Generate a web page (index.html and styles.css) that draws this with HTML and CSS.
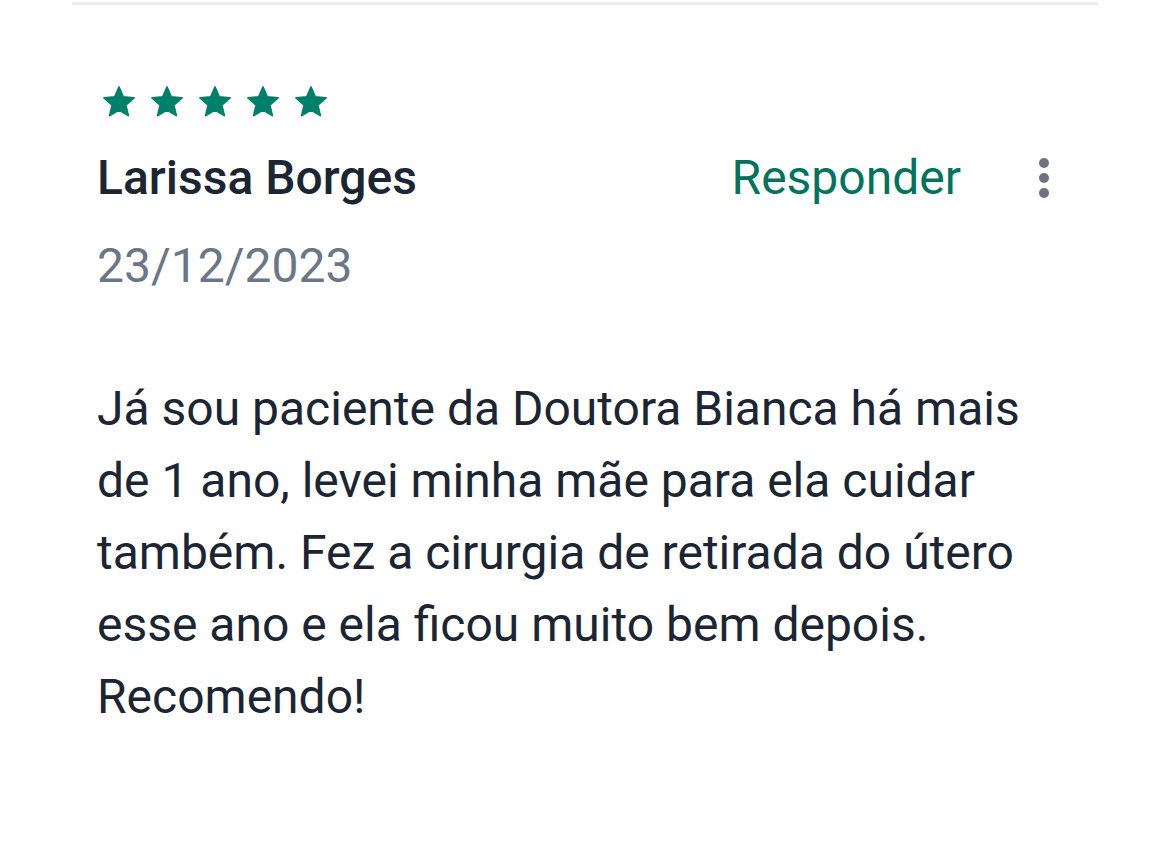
FILE: index.html
```html
<!DOCTYPE html>
<html lang="pt">
<head>
<meta charset="utf-8">
<link rel="stylesheet" href="styles.css">
</head>
<body>
<div class="page">
  <div class="review">
    <div class="stars">
      <svg class="star" viewBox="0 0 24 24"><path d="M12 17.27L18.18 21l-1.64-7.03L22 9.24l-7.19-.61L12 2 9.19 8.63 2 9.24l5.46 4.73L5.82 21z"/></svg>
      <svg class="star" viewBox="0 0 24 24"><path d="M12 17.27L18.18 21l-1.64-7.03L22 9.24l-7.19-.61L12 2 9.19 8.63 2 9.24l5.46 4.73L5.82 21z"/></svg>
      <svg class="star" viewBox="0 0 24 24"><path d="M12 17.27L18.18 21l-1.64-7.03L22 9.24l-7.19-.61L12 2 9.19 8.63 2 9.24l5.46 4.73L5.82 21z"/></svg>
      <svg class="star" viewBox="0 0 24 24"><path d="M12 17.27L18.18 21l-1.64-7.03L22 9.24l-7.19-.61L12 2 9.19 8.63 2 9.24l5.46 4.73L5.82 21z"/></svg>
      <svg class="star" viewBox="0 0 24 24"><path d="M12 17.27L18.18 21l-1.64-7.03L22 9.24l-7.19-.61L12 2 9.19 8.63 2 9.24l5.46 4.73L5.82 21z"/></svg>
    </div>
    <div class="head">
      <div class="name">Larissa Borges</div>
      <div class="actions">
        <span class="reply">Responder</span>
        <svg class="more" viewBox="0 0 12 44"><circle cx="6" cy="7" r="5"/><circle cx="6" cy="22" r="5"/><circle cx="6" cy="37" r="5"/></svg>
      </div>
    </div>
    <div class="date">23/12/2023</div>
    <p class="text">Já sou paciente da Doutora Bianca há mais de 1 ano, levei minha mãe para ela cuidar também. Fez a cirurgia de retirada do útero esse ano e ela ficou muito bem depois. Recomendo!</p>
  </div>
</div>
</body>
</html>
```

FILE: styles.css
```css
* { box-sizing: border-box; }
html, body { margin: 0; padding: 0; background: #fff; }
body { font-family: Roboto, "Liberation Sans", sans-serif; }
.page { width: 1026px; margin-left: 72px; border-top: 3px solid #ececee; margin-top: 2px; }
.review { padding: 79px 0 0 25px; }
.stars { display: flex; gap: 12px; margin-left: 4px; }
.star { width: 36px; height: 36px; fill: #00806a; stroke: #00806a; stroke-width: 1.2; stroke-linejoin: round; }
.head { display: flex; align-items: center; justify-content: space-between; margin-top: 30px; padding-right: 48px; }
.name { font-size: 48px; font-weight: 500; color: #1b2533; line-height: 56px; }
.actions { display: flex; align-items: center; gap: 77px; }
.reply { font-size: 48px; color: #00735c; line-height: 56px; }
.more { width: 12px; height: 44px; fill: #6b7280; }
.date { font-size: 48px; color: #6a7789; margin-top: 32px; line-height: 56px; }
.text { font-size: 48px; line-height: 72px; color: #1b2533; margin: 79px 0 0; width: 960px; }
```
